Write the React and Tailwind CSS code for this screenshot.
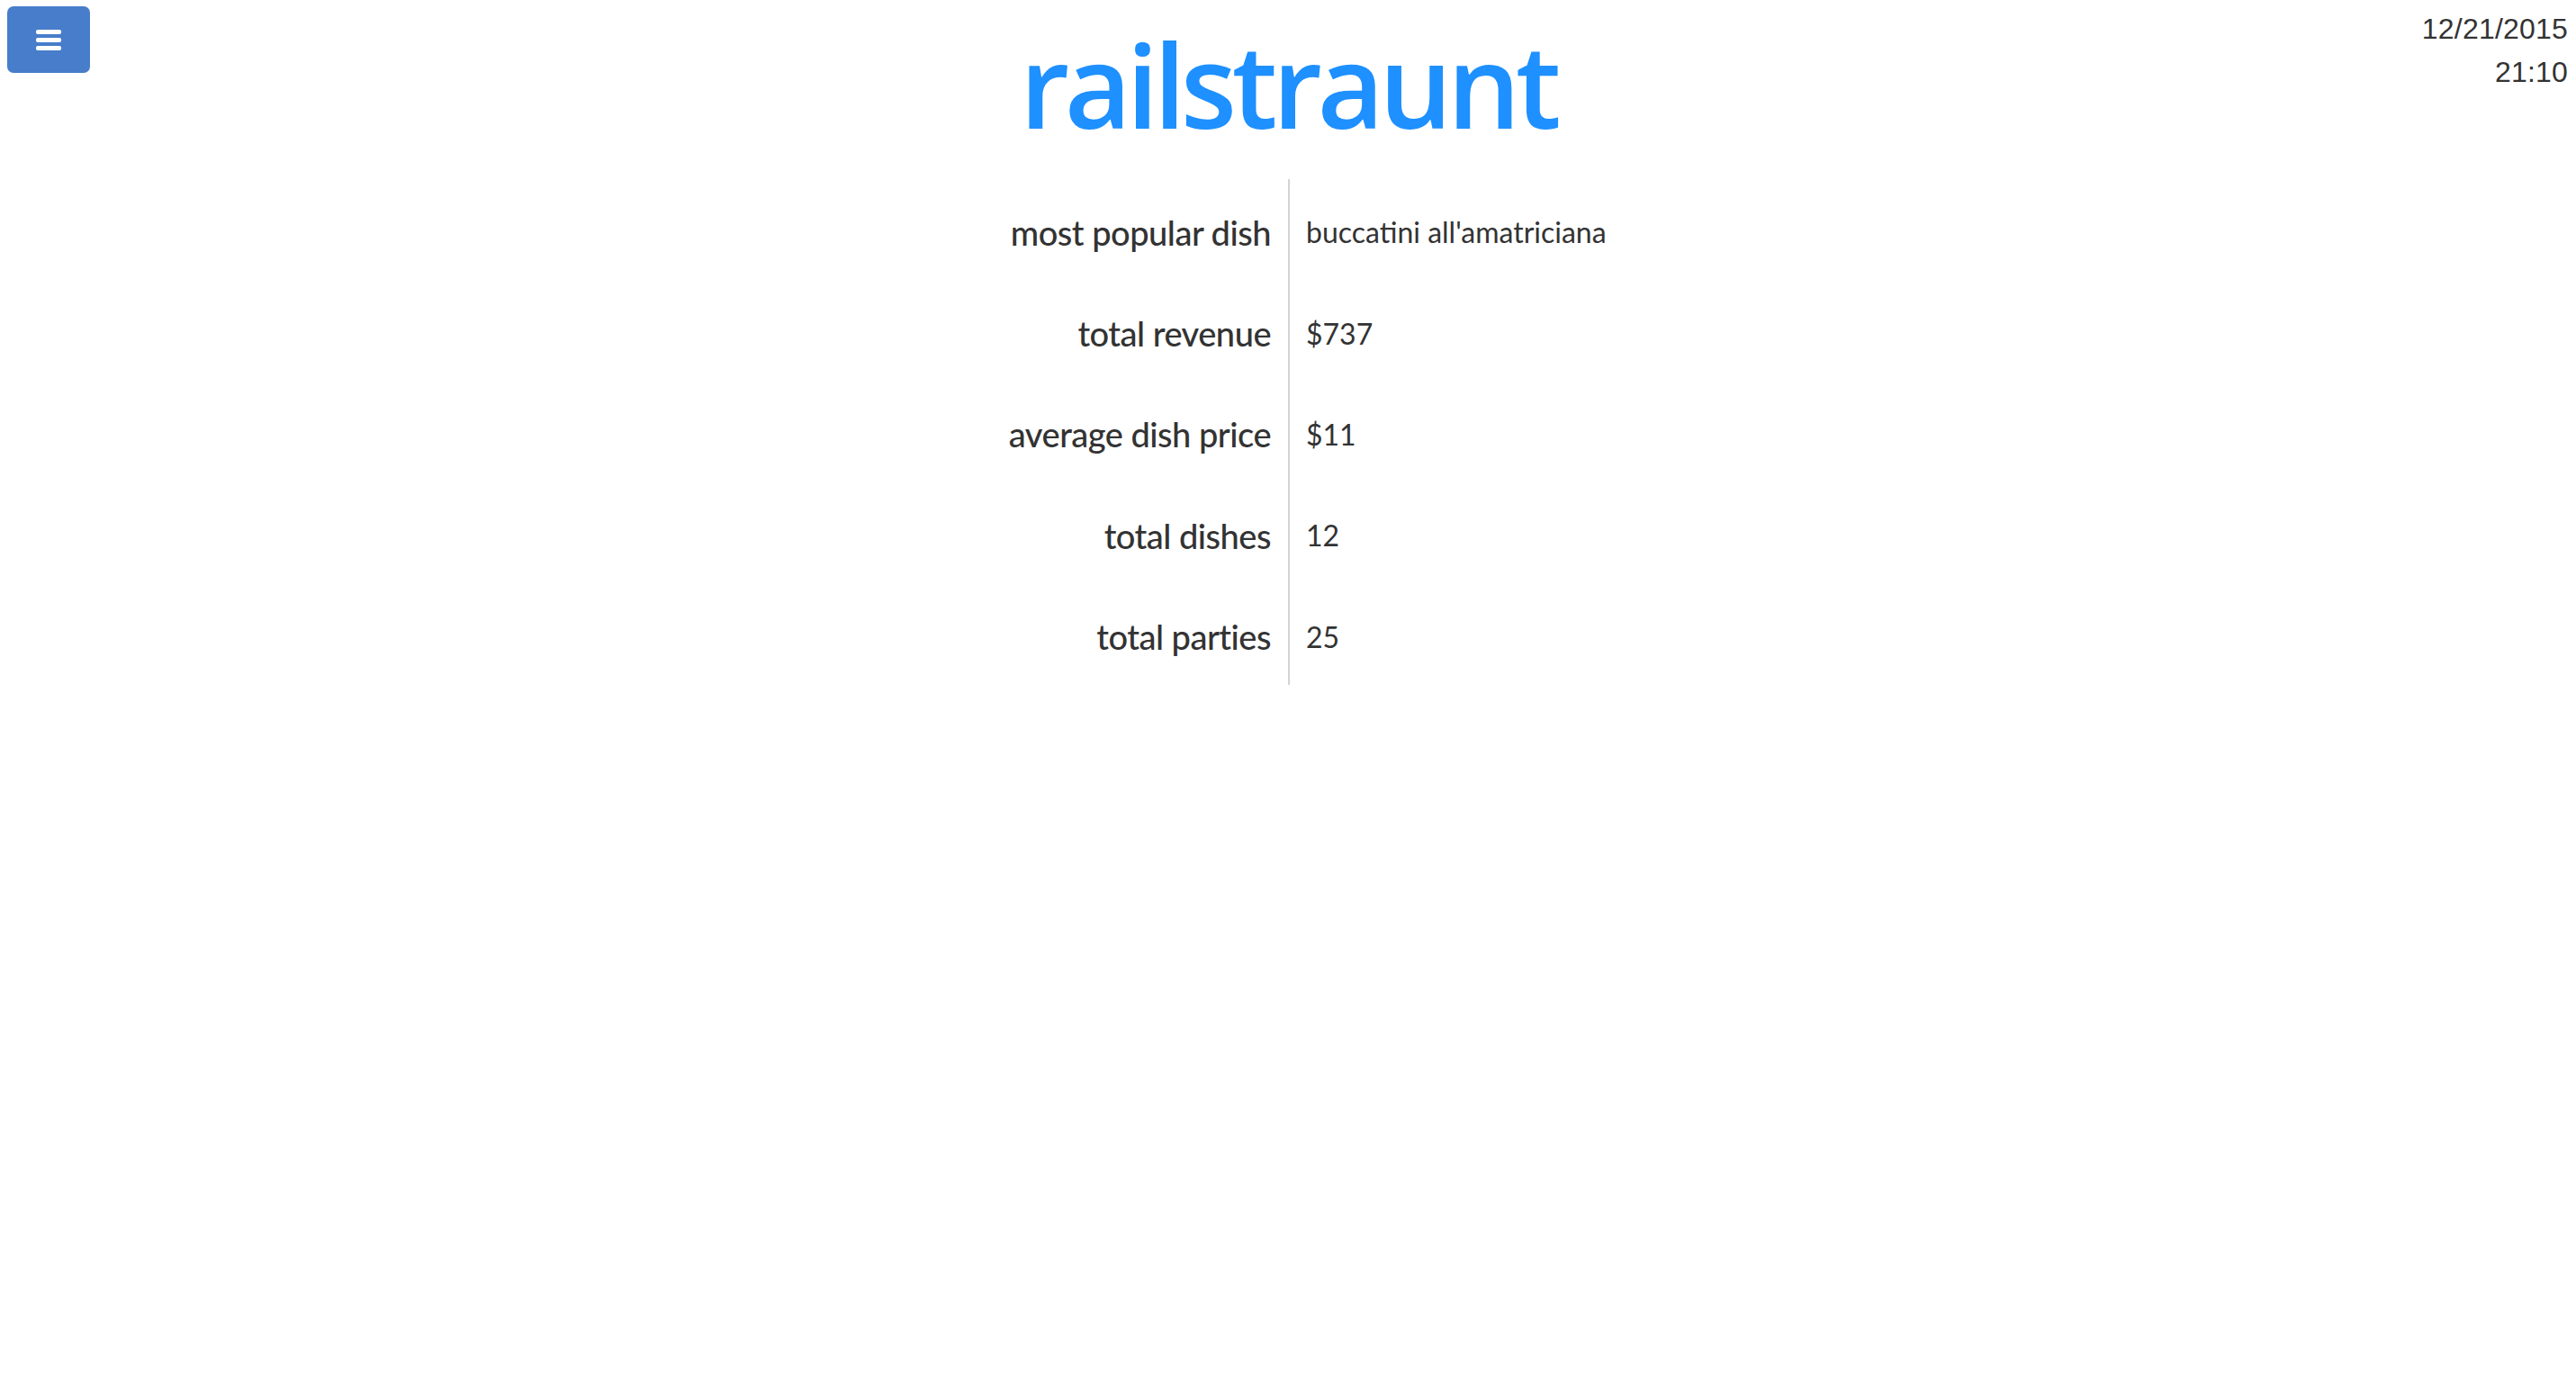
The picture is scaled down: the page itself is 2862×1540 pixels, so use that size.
import React from 'react';

const STATS = [
  { label: 'most popular dish', value: "buccatini all'amatriciana" },
  { label: 'total revenue', value: '$737' },
  { label: 'average dish price', value: '$11' },
  { label: 'total dishes', value: '12' },
  { label: 'total parties', value: '25' },
];

function MenuButton() {
  return (
    <button className="absolute left-[8px] top-[7px] w-[92px] h-[74px] rounded-[7px] bg-[#477dca] flex flex-col items-center justify-center gap-[4px]">
      <span className="block w-[28px] h-[5px] rounded-[2px] bg-white" />
      <span className="block w-[28px] h-[5px] rounded-[2px] bg-white" />
      <span className="block w-[28px] h-[5px] rounded-[2px] bg-white" />
    </button>
  );
}

export default function App() {
  return (
    <div className="relative min-h-[1540px] bg-white text-[#333]">
      <MenuButton />

      {/* clock, top right */}
      <div className="absolute right-[9px] top-[8px] text-right font-['Liberation_Sans',sans-serif] text-[32px] leading-[48px] tracking-[0.2px] text-[#333]">
        <div>12/21/2015</div>
        <div>21:10</div>
      </div>

      <header className="pt-[30px] flex justify-center">
        <h1 className="font-['Open_Sans',sans-serif] font-semibold text-[128px] leading-none tracking-[-5.5px] text-[#1e90ff]">
          railstraunt
        </h1>
      </header>

      <div className="mt-[41px] grid grid-cols-2 font-['Lato',sans-serif]">
        {STATS.map((s) => (
          <React.Fragment key={s.label}>
            <div className="h-[112.4px] pt-[6px] flex items-center justify-end pr-[19px] text-[38px] font-medium tracking-[-0.5px] text-[#333]">
              {s.label}
            </div>
            <div className="h-[112.4px] pt-[6px] flex items-center pl-[18px] border-l-2 border-[#d4d4d4] text-[32px] text-[#333]">
              {s.value}
            </div>
          </React.Fragment>
        ))}
      </div>
    </div>
  );
}
